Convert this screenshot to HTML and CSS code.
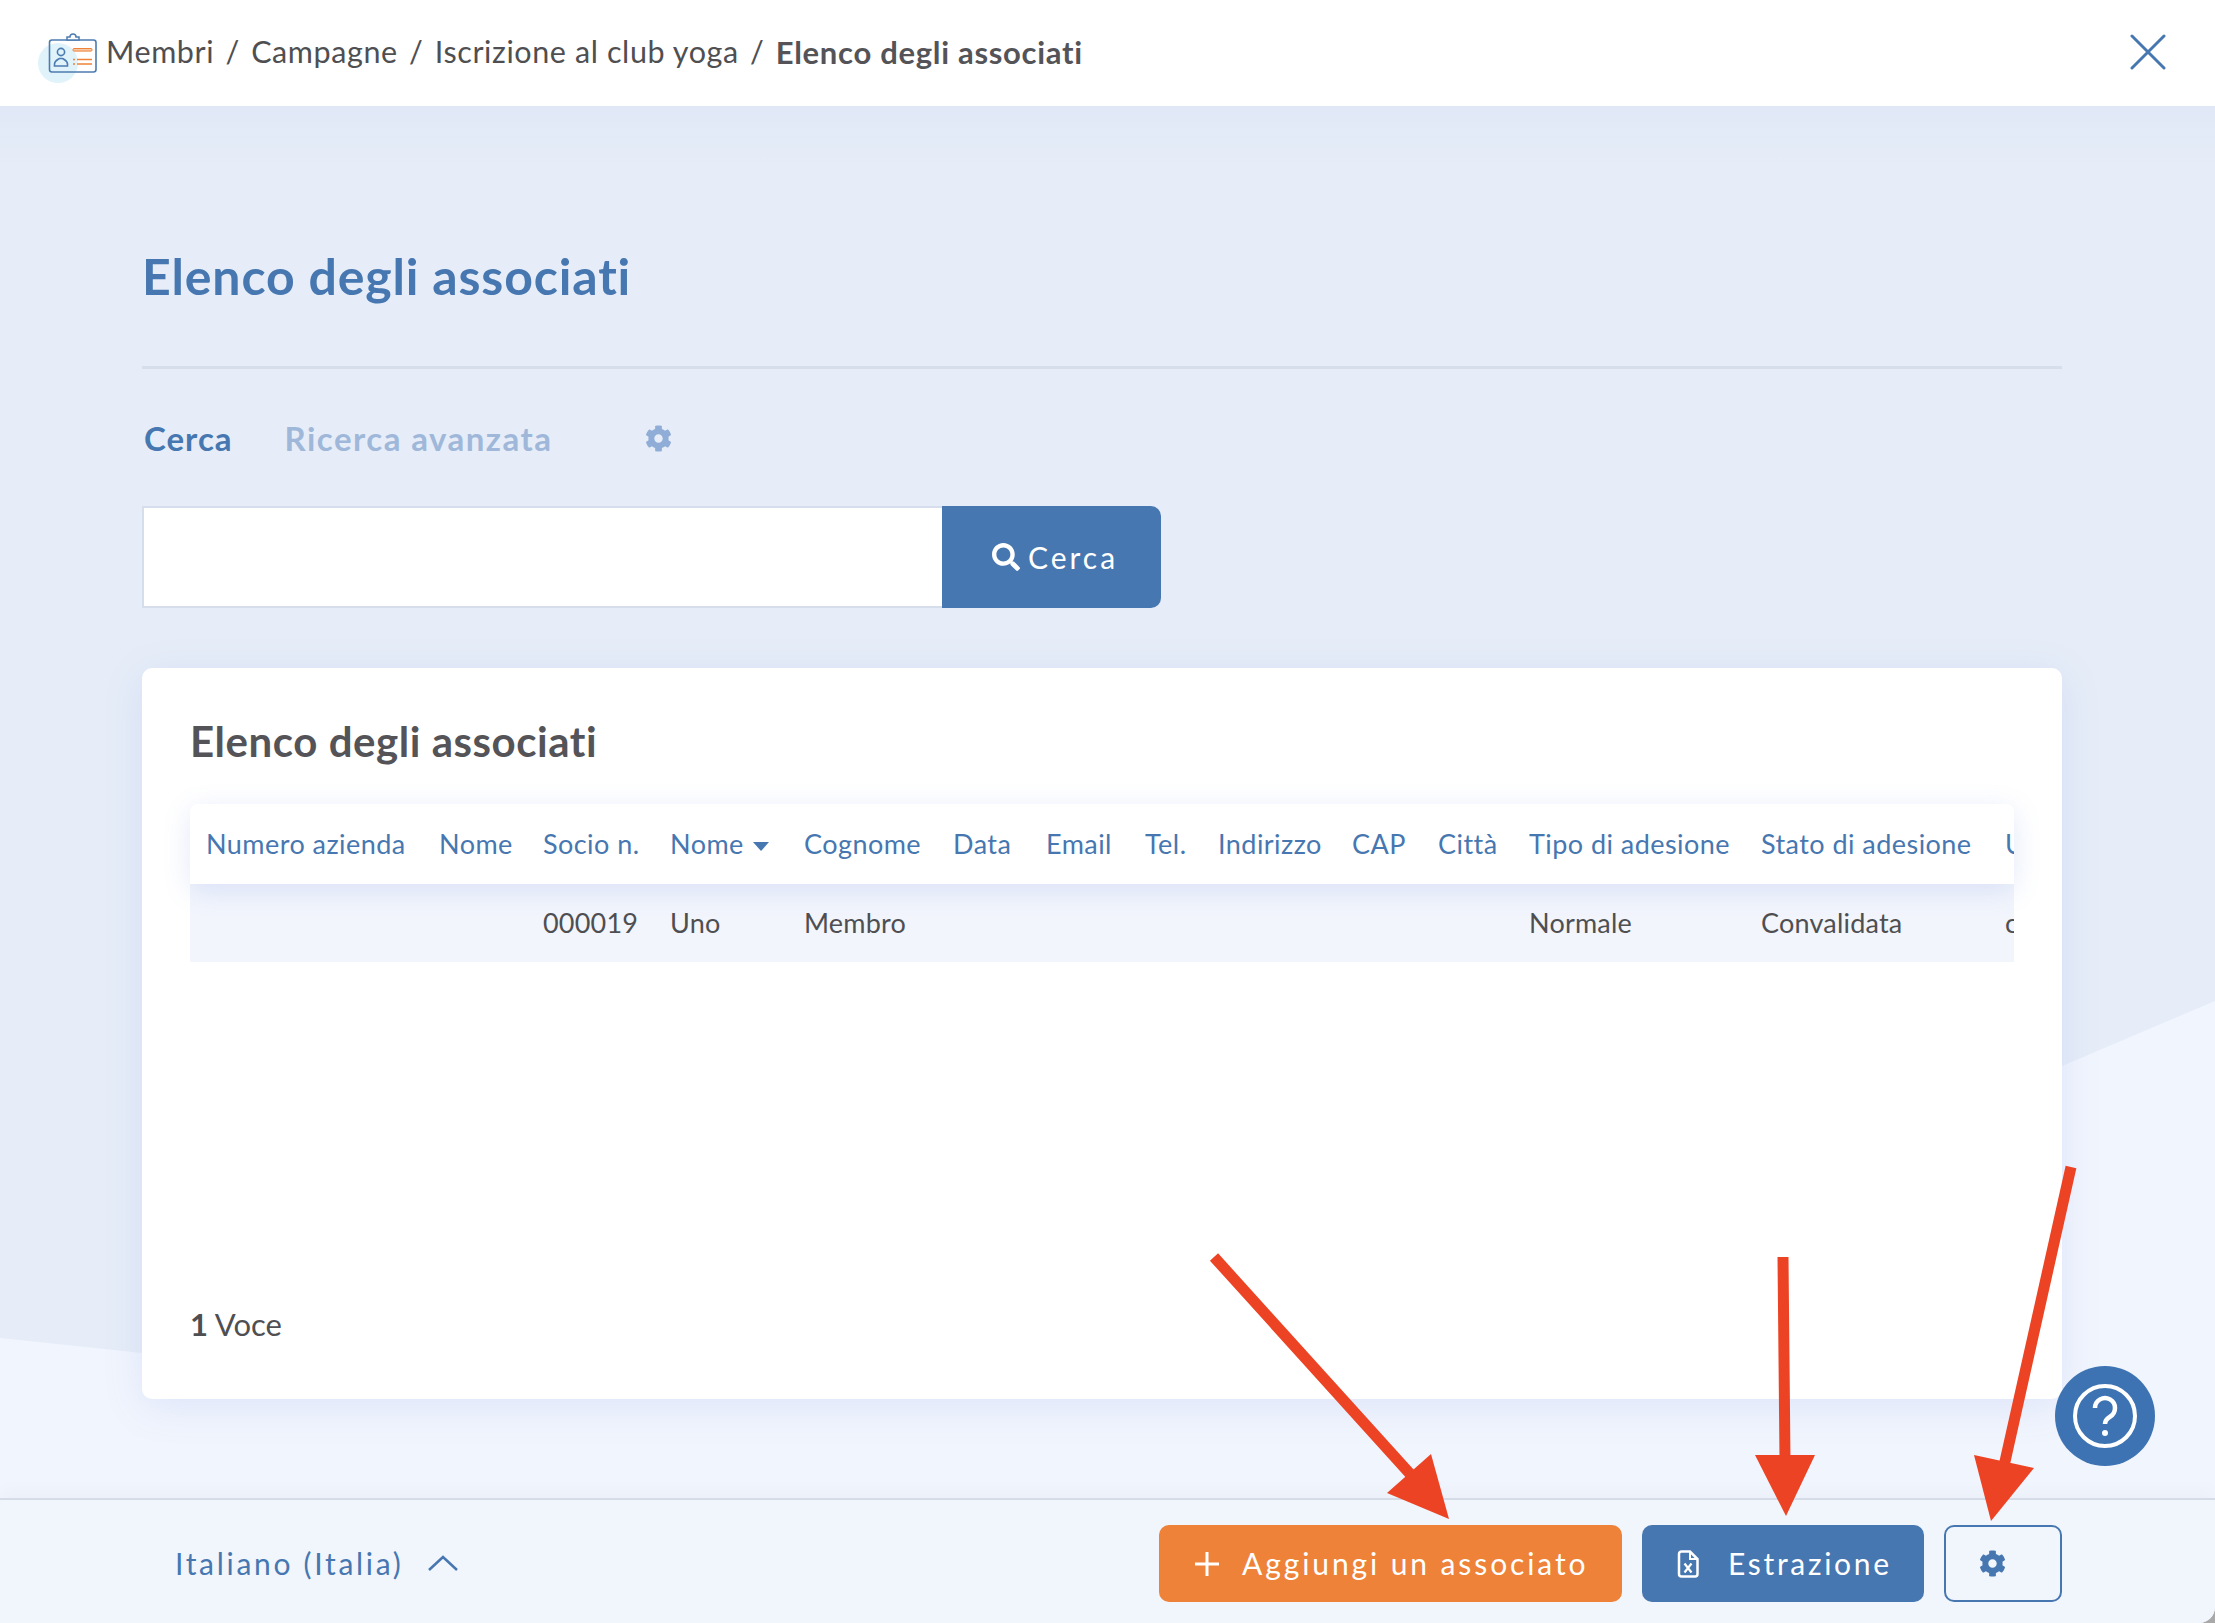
FILE: index.html
```html
<!DOCTYPE html>
<html lang="it">
<head>
<meta charset="utf-8">
<title>Elenco degli associati</title>
<link rel="stylesheet" href="styles.css">
</head>
<body>
<div class="app">
  <header class="topbar">
    <svg class="logo" viewBox="44 22 60 50" width="60" height="50" aria-hidden="true">
      <circle cx="58" cy="57" r="20" fill="#e0f3fb"/>
      <rect x="49.5" y="34" width="46.5" height="32" rx="2.5" fill="none" stroke="#4c7cb0" stroke-width="1.6"/>
      <path d="M67 34v-3h3a3 3 0 0 1 6 0h3v3z" fill="#fff" stroke="#4c7cb0" stroke-width="1.5"/>
      <circle cx="61" cy="46" r="3.6" fill="none" stroke="#4c7cb0" stroke-width="1.6"/>
      <path d="M54.500 60v-2c0-3 2.500-4 5-5.500h3c2.500 1.500 5 2.500 5 5.500v2z" fill="none" stroke="#4c7cb0" stroke-width="1.6"/>
      <rect x="73" y="42.500" width="19" height="2.600" rx="1" fill="#f6c9a6" stroke="#ee8238" stroke-width="1"/>
      <path d="M77 53.500h15M77 58h15M73 53.500h2M73 58h2" stroke="#ee8238" stroke-width="1.500"/>
    </svg>
    <nav class="crumbs">
      <span>Membri</span><span class="sep">/</span><span>Campagne</span><span class="sep">/</span><span>Iscrizione al club yoga</span><span class="sep">/</span><strong>Elenco degli associati</strong>
    </nav>
    <svg class="close" viewBox="0 0 36 36" width="36" height="36" aria-hidden="true">
      <path d="M2 2l32 32M34 2L2 34" stroke="#4777b0" stroke-width="3" stroke-linecap="round"/>
    </svg>
  </header>

  <main class="main">
    <h1 class="title">Elenco degli associati</h1>

    <div class="tabs">
      <span class="tab tab-active">Cerca</span>
      <span class="tab tab-muted">Ricerca avanzata</span>
      <svg class="tab-gear" viewBox="0 0 512 512" width="27" height="27" aria-hidden="true"><path d="M487.4 315.7l-42.6-24.6c4.3-23.2 4.3-47 0-70.2l42.6-24.6c4.900-2.800 7.100-8.600 5.500-14-11.100-35.600-30-67.800-54.700-94.600-3.800-4.100-10-5.100-14.800-2.300L380.800 110c-17.900-15.400-38.500-27.300-60.800-35.100V25.800c0-5.600-3.900-10.500-9.400-11.700-36.700-8.200-74.300-7.800-109.200 0-5.500 1.200-9.400 6.100-9.400 11.700V75c-22.200 7.900-42.800 19.800-60.800 35.100L88.700 85.500c-4.900-2.800-11-1.900-14.800 2.300-24.700 26.700-43.600 58.900-54.700 94.600-1.700 5.400.6 11.200 5.500 14L67.300 221c-4.300 23.200-4.300 47 0 70.200l-42.600 24.600c-4.900 2.800-7.100 8.600-5.500 14 11.100 35.600 30 67.800 54.700 94.600 3.800 4.100 10 5.100 14.800 2.300l42.600-24.600c17.900 15.400 38.500 27.300 60.800 35.100v49.200c0 5.600 3.900 10.500 9.400 11.700 36.700 8.200 74.300 7.800 109.200 0 5.500-1.200 9.400-6.100 9.400-11.700v-49.200c22.200-7.900 42.800-19.800 60.800-35.100l42.600 24.600c4.900 2.800 11 1.900 14.800-2.300 24.700-26.700 43.600-58.900 54.700-94.600 1.500-5.500-.7-11.300-5.600-14.100zM256 336c-44.100 0-80-35.900-80-80s35.900-80 80-80 80 35.900 80 80-35.900 80-80 80z"/></svg>
    </div>

    <form class="search">
      <input class="search-input" type="text" aria-label="Cerca">
      <button class="search-btn" type="button">
        <svg viewBox="0 0 512 512" width="28" height="28" aria-hidden="true"><path d="M505 442.700L405.300 343c-4.500-4.500-10.600-7-17-7H372c27.600-35.300 44-79.700 44-128C416 93.100 322.900 0 208 0S0 93.100 0 208s93.100 208 208 208c48.300 0 92.700-16.400 128-44v16.300c0 6.400 2.500 12.500 7 17l99.700 99.700c9.400 9.400 24.600 9.400 33.900 0l28.300-28.300c9.400-9.400 9.400-24.600.1-34zM208 336c-70.700 0-128-57.200-128-128 0-70.700 57.200-128 128-128 70.700 0 128 57.200 128 128 0 70.700-57.200 128-128 128z"/></svg>
        <span>Cerca</span>
      </button>
    </form>

    <section class="card">
      <h2 class="card-title">Elenco degli associati</h2>
      <div class="table">
        <div class="row row-head">
          <span>Numero azienda</span><span>Nome</span><span>Socio n.</span><span>Nome <i class="caret"></i></span><span>Cognome</span><span>Data</span><span>Email</span><span>Tel.</span><span>Indirizzo</span><span>CAP</span><span>Città</span><span>Tipo di adesione</span><span>Stato di adesione</span><span>Utente</span>
        </div>
        <div class="row row-body">
          <span></span><span></span><span>000019</span><span>Uno</span><span>Membro</span><span></span><span></span><span></span><span></span><span></span><span></span><span>Normale</span><span>Convalidata</span><span>c</span>
        </div>
      </div>
      <p class="count"><b>1</b> Voce</p>
    </section>
  </main>

  <footer class="footer">
    <div class="lang">
      <span>Italiano (Italia)</span>
      <svg viewBox="0 0 32 18" width="32" height="18" aria-hidden="true"><path d="M2 16L16 3l14 13" fill="none" stroke="#4777b0" stroke-width="2.500"/></svg>
    </div>
    <button class="btn btn-orange" type="button">
      <svg viewBox="0 0 24 24" width="24" height="24" aria-hidden="true"><path d="M12 0v24M0 12h24" stroke="#fff" stroke-width="3"/></svg>
      <span>Aggiungi un associato</span>
    </button>
    <button class="btn btn-blue" type="button">
      <svg viewBox="0 0 22 28" width="22" height="28" aria-hidden="true"><path d="M2 4a2.500 2.500 0 0 1 2.500-2.500H13L20.500 9v15a2.500 2.500 0 0 1-2.500 2.500H4.500A2.500 2.500 0 0 1 2 24z" fill="none" stroke="#fff" stroke-width="2.500"/><path d="M13 2v7h7" fill="none" stroke="#fff" stroke-width="2"/><path d="M7.500 13.500l7 9M14.500 13.500l-7 9" stroke="#fff" stroke-width="2.200"/></svg>
      <span>Estrazione</span>
    </button>
    <button class="btn btn-outline" type="button" aria-label="Impostazioni">
      <svg viewBox="0 0 512 512" width="27" height="27" aria-hidden="true"><path d="M487.4 315.7l-42.6-24.6c4.3-23.2 4.3-47 0-70.2l42.6-24.6c4.900-2.800 7.100-8.600 5.500-14-11.100-35.600-30-67.800-54.700-94.600-3.800-4.100-10-5.100-14.800-2.300L380.800 110c-17.900-15.400-38.500-27.300-60.800-35.100V25.800c0-5.600-3.900-10.500-9.400-11.700-36.700-8.200-74.300-7.800-109.200 0-5.500 1.200-9.400 6.100-9.400 11.700V75c-22.200 7.900-42.800 19.800-60.800 35.100L88.700 85.500c-4.900-2.800-11-1.900-14.800 2.300-24.700 26.700-43.600 58.900-54.700 94.600-1.700 5.400.6 11.200 5.500 14L67.300 221c-4.300 23.200-4.300 47 0 70.200l-42.600 24.600c-4.900 2.800-7.100 8.600-5.500 14 11.100 35.600 30 67.800 54.700 94.600 3.800 4.100 10 5.100 14.800 2.300l42.600-24.600c17.900 15.400 38.500 27.300 60.800 35.100v49.200c0 5.600 3.900 10.500 9.400 11.700 36.700 8.200 74.300 7.800 109.200 0 5.500-1.200 9.400-6.100 9.400-11.700v-49.200c22.200-7.900 42.800-19.800 60.800-35.100l42.600 24.600c4.900 2.800 11 1.900 14.800-2.300 24.700-26.700 43.600-58.900 54.700-94.600 1.500-5.500-.7-11.300-5.600-14.100zM256 336c-44.100 0-80-35.900-80-80s35.900-80 80-80 80 35.900 80 80-35.900 80-80 80z"/></svg>
    </button>
  </footer>

  <button class="help" type="button" aria-label="Aiuto">
    <svg viewBox="0 0 66 66" width="66" height="66" aria-hidden="true">
      <circle cx="33" cy="33" r="30" fill="none" stroke="#fff" stroke-width="4"/>
      <path d="M23 25a10 10 0 1 1 15 8.700c-3 1.800-5 3.300-5 7.300" fill="none" stroke="#fff" stroke-width="4.500"/>
      <circle cx="33" cy="50" r="3" fill="#fff"/>
    </svg>
  </button>

  <svg class="arrows" viewBox="0 0 2215 1623" width="2215" height="1623" aria-hidden="true">
    <path d="M1214 1257L1412 1476M1783 1257L1785 1460M2071 1167L2004 1466" fill="none" stroke="#ec4324" stroke-width="11"/>
    <path d="M1431 1454L1387 1493L1449 1519z" fill="#ec4324"/>
    <path d="M1755 1455L1815 1455L1786 1516z" fill="#ec4324"/>
    <path d="M1974 1455L2034 1468L1991 1521z" fill="#ec4324"/>
  </svg>
</div>
</body>
</html>
```
FILE: styles.css
```css
* { box-sizing: border-box; }

html, body { margin: 0; padding: 0; }

body {
  background: #a9a9a9;
  font-family: "Lato", "Noto Sans", sans-serif;
  color: #4f4f52;
}

.app {
  position: relative;
  width: 2215px;
  height: 1623px;
  display: flex;
  flex-direction: column;
  overflow: hidden;
  border-bottom-right-radius: 16px;
  background: #f1f5fc;
}

/* top bar */
.topbar {
  height: 106px;
  flex: none;
  display: flex;
  align-items: center;
  padding: 0 49px 0 44px;
  background: #fff;
  position: relative;
  z-index: 2;
}

.logo { flex: none; margin-right: 2px; overflow: visible; }

.crumbs {
  flex: 1;
  display: flex;
  gap: 11.3px;
  padding-bottom: 3px;
  font-size: 30.5px;
  letter-spacing: 0.6px;
  white-space: nowrap;
}

.crumbs strong {
  font-weight: 700;
  font-size: 31px;
  letter-spacing: 0.7px;
  color: #545458;
}

.close { flex: none; margin-bottom: 2px; }

/* main */
.main {
  flex: 1;
  position: relative;
  padding: 142px 153px 0 142px;
  background: linear-gradient(#e0e8f7, #e6edf8 60px);
}

.main::before {
  content: "";
  position: absolute;
  inset: 0;
  background: #f1f5fd;
  clip-path: polygon(0 1232px, 142px 1247px, 2062px 960px, 2215px 895px, 2215px 1392px, 0 1392px);
}

.main > * { position: relative; }

.title {
  margin: 0;
  height: 121px;
  line-height: 56px;
  border-bottom: 3px solid #d5deea;
  font-size: 50px;
  font-weight: 700;
  letter-spacing: 0.85px;
  color: #4777b0;
}

.tabs {
  display: flex;
  align-items: center;
  height: 40px;
  margin-top: 50px;
  padding: 0 0 2px 2px;
  font-size: 33px;
  letter-spacing: 1px;
}

.tab-active { font-weight: 700; color: #4777b0; }
.tab-muted { margin-left: 52px; font-weight: 700; letter-spacing: 1.45px; color: #9fb8da; }
.tab-gear { margin-left: 93px; fill: #8fadd6; }

.search {
  display: flex;
  width: 1019px;
  height: 102px;
  margin: 47px 0 0;
}

.search-input {
  flex: 1;
  min-width: 0;
  border: 2px solid #d5deea;
  border-right: 0;
  background: #fff;
  outline: none;
}

.search-btn {
  width: 219px;
  padding: 0 0 0 7px;
  display: flex;
  align-items: center;
  justify-content: center;
  gap: 8px;
  border: 0;
  border-radius: 0 10px 10px 0;
  background: #4777b0;
  color: #fff;
  font: inherit;
  font-size: 30px;
  letter-spacing: 3px;
}

.search-btn svg { fill: #fff; }

/* card */
.card {
  height: 731px;
  margin-top: 60px;
  padding: 48px 48px 57px;
  display: flex;
  flex-direction: column;
  background: #fff;
  border-radius: 10px;
  box-shadow: 0 8px 40px rgba(90, 120, 225, 0.13);
}

.card-title {
  margin: 0;
  font-size: 42px;
  line-height: 50px;
  font-weight: 700;
  letter-spacing: 0.55px;
  color: #545458;
}

.table { margin-top: 38px; }

.row {
  display: grid;
  grid-template-columns: 233px 104px 127px 134px 149px 93px 99px 73px 134px 86px 91px 232px 244px 100px;
  align-items: center;
  overflow: hidden;
  padding-bottom: 2px;
  font-size: 27px;
  white-space: nowrap;
}

.row > span { padding-left: 16px; }

.row-head {
  position: relative;
  z-index: 1;
  height: 80px;
  background: #fff;
  color: #4777b0;
  letter-spacing: 0.45px;
  border-radius: 8px 8px 0 0;
  box-shadow: 0 6px 28px rgba(90, 120, 225, 0.16);
}

.row-body {
  height: 78px;
  background: #f2f5fc;
  letter-spacing: 0.2px;
}

.caret {
  display: inline-block;
  width: 0;
  height: 0;
  margin-left: 2px;
  vertical-align: 3px;
  border-left: 8px solid transparent;
  border-right: 8px solid transparent;
  border-top: 9px solid #4777b0;
}

.count {
  margin: auto 0 0;
  font-size: 31px;
  line-height: 36px;
}

/* footer */
.footer {
  height: 125px;
  flex: none;
  position: relative;
  display: flex;
  align-items: center;
  gap: 20px;
  padding: 4px 153px 0 175px;
  border-top: 2px solid #d5dce8;
  background: #f1f5fc;
  box-shadow: 0 -8px 16px rgba(60, 70, 100, 0.025);
}

.lang {
  margin-right: auto;
  display: flex;
  align-items: center;
  gap: 24px;
  padding-bottom: 2px;
  color: #4777b0;
  font-size: 30px;
  letter-spacing: 2.7px;
}

.btn {
  height: 77px;
  display: flex;
  align-items: center;
  border: 0;
  border-radius: 10px;
  color: #fff;
  font: inherit;
  font-size: 30px;
  letter-spacing: 2.7px;
}

.btn span { padding-bottom: 2px; }

.btn-orange {
  width: 463px;
  padding: 0 0 0 36px;
  gap: 23px;
  letter-spacing: 2.9px;
  background: #ee8238;
}

.btn-blue {
  width: 282px;
  padding: 0 0 0 35px;
  gap: 29px;
  background: #4777b0;
}

.btn-outline {
  width: 118px;
  padding: 0 0 0 33px;
  border: 2px solid #4777b0;
  background: transparent;
}

.btn-outline svg { fill: #4777b0; }

/* overlays */
.help {
  position: absolute;
  left: 2055px;
  top: 1366px;
  width: 100px;
  height: 100px;
  padding: 0;
  display: flex;
  align-items: center;
  justify-content: center;
  border: 0;
  border-radius: 50%;
  background: #3d73b3;
}

.arrows {
  position: absolute;
  left: 0;
  top: 0;
  pointer-events: none;
}
```
